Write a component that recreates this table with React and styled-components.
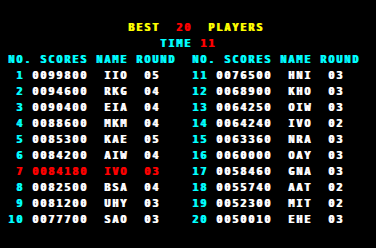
import React from 'react'
import styled, { createGlobalStyle } from 'styled-components'

const cyan = '#00ffff'
const yellow = '#ffff00'
const red = '#ff0000'
const white = '#ffffff'

const GlobalStyle = createGlobalStyle`
  html, body {
    margin: 0;
    padding: 0;
    background: #000;
  }
`

const Screen = styled.div`
  width: 376px;
  height: 248px;
  box-sizing: border-box;
  padding-top: 24px;
  background: #000;
  color: ${white};
  font-family: "DejaVu Sans Mono", "Liberation Mono", monospace;
  font-weight: 700;
  font-size: 10px;
  letter-spacing: 1.98px;
  line-height: 8px;
  text-shadow: 1px 0 currentColor;
  overflow: hidden;
`

const Line = styled.div`
  height: 8px;
  margin-bottom: 8px;
  padding-left: ${p => p.$col * 8}px;
  white-space: pre;
`

const Word = styled.span`
  color: ${p => p.$color};
`

const Tables = styled.div`
  display: flex;
  padding-left: 8px;
`

const Table = styled.div`
  width: 192px;
`

const HeaderRow = styled.div`
  height: 8px;
  margin-bottom: 8px;
  color: ${cyan};
  white-space: pre;
`

const Row = styled.div`
  display: grid;
  grid-template-columns: 24px 72px 40px 16px;
  height: 8px;
  margin-bottom: 8px;
  color: ${p => (p.$highlight ? red : white)};
  white-space: pre;
`

const Rank = styled.span`
  padding-right: 8px;
  text-align: right;
  color: ${p => (p.$highlight ? red : cyan)};
`

const players = [
  ['0099800', 'IIO', '05'],
  ['0094600', 'RKG', '04'],
  ['0090400', 'EIA', '04'],
  ['0088600', 'MKM', '04'],
  ['0085300', 'KAE', '05'],
  ['0084200', 'AIW', '04'],
  ['0084180', 'IVO', '03'],
  ['0082500', 'BSA', '04'],
  ['0081200', 'UHY', '03'],
  ['0077700', 'SAO', '03'],
  ['0076500', 'HNI', '03'],
  ['0068900', 'KHO', '03'],
  ['0064250', 'OIW', '03'],
  ['0064240', 'IVO', '02'],
  ['0063360', 'NRA', '03'],
  ['0060000', 'OAY', '03'],
  ['0058460', 'GNA', '03'],
  ['0055740', 'AAT', '02'],
  ['0052300', 'MIT', '02'],
  ['0050010', 'EHE', '03'],
]

const CURRENT = 7

const ScoreTable = ({ from }) => (
  <Table>
    <HeaderRow>NO. SCORES NAME ROUND</HeaderRow>
    {players.slice(from, from + 10).map(([score, name, round], i) => {
      const rank = from + i + 1
      const hl = rank === CURRENT
      return (
        <Row key={rank} $highlight={hl}>
          <Rank $highlight={hl}>{rank}</Rank>
          <span>{score}</span>
          <span>{name}</span>
          <span>{round}</span>
        </Row>
      )
    })}
  </Table>
)

export default function App() {
  return (
    <>
      <GlobalStyle />
      <Screen>
        <Line $col={16}>
          <Word $color={yellow}>BEST  </Word>
          <Word $color={red}>20  </Word>
          <Word $color={yellow}>PLAYERS</Word>
        </Line>
        <Line $col={20}>
          <Word $color={cyan}>TIME </Word>
          <Word $color={red}>11</Word>
        </Line>
        <Tables>
          <ScoreTable from={0} />
          <ScoreTable from={10} />
        </Tables>
      </Screen>
    </>
  )
}
